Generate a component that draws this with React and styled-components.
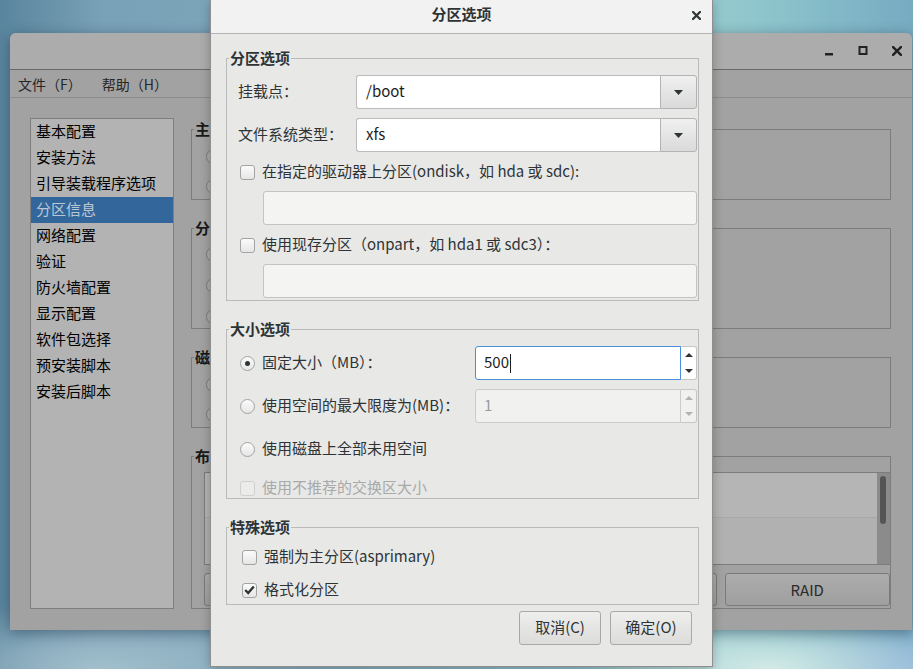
import React from 'react'
import styled, { createGlobalStyle } from 'styled-components'

const GlobalStyle = createGlobalStyle`
  html, body { margin: 0; padding: 0; }
  body {
    width: 913px;
    height: 669px;
    overflow: hidden;
    font-family: "Noto Sans CJK SC", "Noto Sans", sans-serif;
  }
`

const Desktop = styled.div`
  position: relative;
  width: 913px;
  height: 669px;
  overflow: hidden;
  background:
    radial-gradient(ellipse 190px 60px at 770px 669px, #d3eae7 0%, rgba(211,234,231,0) 100%),
    radial-gradient(ellipse 120px 50px at 913px 669px, #8cb2da 0%, rgba(140,178,218,0) 100%),
    radial-gradient(ellipse 230px 70px at 100px 669px, #a2bfcc 0%, rgba(162,191,204,0) 100%),
    linear-gradient(90deg, #5a859e 0px, #78a0b6 100px, #80a9bc 300px, #93c9cd 730px, #86bdc9 810px, #77abc2 913px);
`

/* ---------- main window (dimmed, behind the dialog) ---------- */

const MainWindow = styled.div`
  position: absolute;
  left: 10px;
  top: 33px;
  width: 902px;
  height: 597px;
  display: flex;
  flex-direction: column;
  background: #a2a2a2;
  border-radius: 6px 6px 0 0;
  box-shadow: 0 3px 14px rgba(20, 40, 60, 0.45);
  overflow: hidden;
  color: #1c1c1c;
`

const WinTitleBar = styled.div`
  height: 36px;
  flex: none;
  display: flex;
  align-items: center;
  justify-content: flex-end;
  gap: 10px;
  padding-right: 3px;
  background: #acacac;
  border-bottom: 1px solid #6a6a6a;
`

const WinButton = styled.div`
  width: 24px;
  height: 24px;
  display: grid;
  place-items: center;
`

const MenuBar = styled.div`
  height: 27px;
  flex: none;
  display: flex;
  align-items: center;
  gap: 20px;
  padding-left: 8px;
  border-bottom: 1px solid #8c8c8c;
  font-size: 14px;
  line-height: 18px;
  color: #262626;
`

const WinBody = styled.div`
  flex: 1;
  display: flex;
  gap: 17px;
  padding: 20px 21px 0 20px;
`

const Sidebar = styled.ul`
  margin: 0;
  padding: 0;
  list-style: none;
  width: 144px;
  height: 491px;
  flex: none;
  box-sizing: border-box;
  background: #b3b3b3;
  border: 1px solid #7f7f7f;
`

const SideItem = styled.li`
  height: 26px;
  line-height: 24px;
  padding-left: 5px;
  font-size: 15px;
  color: ${p => (p.$selected ? '#bcc7d4' : '#000')};
  background: ${p => (p.$selected ? '#33669a' : 'transparent')};
`

const MainColumn = styled.div`
  flex: 1;
  display: flex;
  flex-direction: column;
  gap: 28px;
  padding-top: 11px;
`

const MainGroup = styled.div`
  border: 1px solid #7c7c7c;
  display: flex;
  flex-direction: column;
  padding: 0 0 ${p => p.$pb}px ${p => p.$pl}px;
`

const MainGroupTitle = styled.div`
  align-self: flex-start;
  margin: -10px 0 0 ${p => 2 - p.$pl}px;
  padding: 0 1px;
  background: #a2a2a2;
  font-weight: bold;
  font-size: 15px;
  line-height: 18px;
  color: #1a1a1a;
`

const MainRadio = styled.span`
  display: block;
  width: 15px;
  height: 15px;
  box-sizing: border-box;
  border-radius: 50%;
  border: 1px solid #7b7b7b;
  background: #acacac;
  margin-top: ${p => p.$mt}px;
`

const LayoutList = styled.div`
  height: 93px;
  margin-top: 7px;
  box-sizing: border-box;
  border: 1px solid #7c7c7c;
  border-right: none;
  display: flex;
  background: #b1b1b1;
`

const ListRows = styled.div`
  flex: 1;
  display: flex;
  flex-direction: column;
`

const ListRow = styled.div`
  height: 44px;
  border-bottom: 1px solid ${p => (p.$light ? '#a8a8a8' : 'transparent')};
  background: ${p => (p.$light ? '#b5b5b5' : '#b1b1b1')};
`

const Scrollbar = styled.div`
  width: 13px;
  background: #8b8b8b;
  padding: 3px 0 0 3px;
  box-sizing: border-box;
`

const Thumb = styled.div`
  width: 6px;
  height: 48px;
  border-radius: 3px;
  background: #555;
`

const MainButtons = styled.div`
  margin-top: 8px;
  display: grid;
  grid-template-columns: repeat(4, 1fr);
  gap: 8px;
`

const MainButton = styled.div`
  height: 33px;
  box-sizing: border-box;
  border: 1px solid #7a7a7a;
  border-radius: 3px;
  background: linear-gradient(#acacac, #9f9f9f);
  display: grid;
  place-items: center;
  font-size: 15px;
  line-height: 18px;
  color: #2b2b2b;
`

/* ---------- dialog ---------- */

const Dialog = styled.div`
  position: absolute;
  left: 210px;
  top: 0;
  width: 503px;
  height: 667px;
  box-sizing: border-box;
  border: 1px solid #8f8f8f;
  border-top: none;
  background: #e8e8e7;
  display: flex;
  flex-direction: column;
  box-shadow: 0 2px 10px rgba(0, 0, 0, 0.25);
  color: #2e3436;
  font-size: 15px;
  line-height: 18px;
`

const DialogTitleBar = styled.div`
  height: 34px;
  flex: none;
  box-sizing: border-box;
  display: grid;
  grid-template-columns: 1fr auto 1fr;
  align-items: center;
  background: #f2f2f2;
  border-bottom: 1px solid #b3b3b3;
`

const DialogTitle = styled.div`
  font-weight: bold;
  font-size: 15px;
  color: #2e3436;
  margin-top: -6px;
`

const CloseBtn = styled.div`
  justify-self: end;
  margin-right: 11px;
  margin-top: -3px;
  display: grid;
  place-items: center;
`

const DialogBody = styled.div`
  flex: 1;
  display: flex;
  flex-direction: column;
  gap: 28px;
  padding: 24px 13px 0 15px;
`

const DGroup = styled.div`
  border: 1px solid #bababa;
  display: flex;
  flex-direction: column;
  padding: 0 1px ${p => p.$pb}px 11px;
`

const DGroupTitle = styled.div`
  align-self: flex-start;
  margin: -10px 0 0 -9px;
  padding: 0 1px;
  background: #e8e8e7;
  font-weight: bold;
  line-height: 18px;
`

const FormGrid = styled.div`
  display: grid;
  grid-template-columns: ${p => p.$label}px 1fr;
  grid-auto-rows: 34px;
  row-gap: 9px;
  align-items: center;
  margin-top: 8px;
`

const Text = styled.span`
  line-height: 18px;
  padding-bottom: 2px;
  color: ${p => (p.$disabled ? '#a9a9a9' : 'inherit')};
`

const Combo = styled.div`
  display: flex;
  height: 34px;
`

const ComboEntry = styled.div`
  flex: 1;
  display: flex;
  align-items: center;
  padding-left: 9px;
  background: #fff;
  border: 1px solid #bcbcbc;
  border-right: none;
  border-radius: 3px 0 0 3px;
  color: #1d1d1d;
`

const ComboButton = styled.div`
  width: 37px;
  box-sizing: border-box;
  border: 1px solid #b3b3b3;
  border-radius: 0 3px 3px 0;
  background: linear-gradient(#f0f0f0, #dadada);
  display: grid;
  place-items: center;
`

const CheckRow = styled.div`
  height: ${p => p.$h || 18}px;
  display: flex;
  align-items: center;
  gap: 7px;
  margin-left: ${p => p.$indent || 2}px;
  margin-top: ${p => p.$mt || 0}px;
  white-space: nowrap;
  ${p => p.$span && 'grid-column: 1 / span 2;'}
`

const Box = styled.span`
  width: 15px;
  height: 15px;
  flex: none;
  box-sizing: border-box;
  border: 1px solid ${p => (p.$disabled ? '#d0d0d0' : '#a3a3a3')};
  border-radius: ${p => (p.$round ? '50%' : '3px')};
  background: ${p => (p.$disabled ? '#ececeb' : 'linear-gradient(#fbfbfb, #e6e6e6)')};
  display: grid;
  place-items: center;
`

const Dot = styled.span`
  width: 5px;
  height: 5px;
  border-radius: 50%;
  background: #2e3436;
`

const InsensitiveEntry = styled.div`
  height: 34px;
  margin: ${p => p.$mt}px 0 0 25px;
  box-sizing: border-box;
  background: #f4f4f3;
  border: 1px solid #c3c3c3;
  border-radius: 3px;
`

const Spin = styled.div`
  display: flex;
  height: 34px;
`

const SpinEntry = styled.div`
  flex: 1;
  display: flex;
  align-items: center;
  padding-left: 8px;
  border: 1px solid ${p => (p.$focus ? '#4a90d9' : '#cbcbcb')};
  border-radius: 3px 0 0 3px;
  background: ${p => (p.$disabled ? '#f1f1f0' : '#fff')};
  color: ${p => (p.$disabled ? '#9c9c9c' : '#1d1d1d')};
`

const Caret = styled.span`
  width: 1px;
  height: 19px;
  margin-left: 1px;
  background: #1d1d1d;
`

const SpinArrows = styled.div`
  width: 16px;
  box-sizing: border-box;
  border: 1px solid #c6c6c6;
  border-left: none;
  border-radius: 0 3px 3px 0;
  background: ${p => (p.$disabled ? '#f1f1f0' : '#fff')};
  display: flex;
  flex-direction: column;
  justify-content: space-around;
  align-items: center;
`

const ButtonRow = styled.div`
  margin-top: -22px;
  display: flex;
  justify-content: flex-end;
  gap: 9px;
  padding-right: 7px;
`

const DlgButton = styled.div`
  width: 82px;
  height: 34px;
  box-sizing: border-box;
  border: 1px solid #a9a9a9;
  border-radius: 3px;
  background: linear-gradient(#eeeeed, #dcdcdb);
  display: grid;
  place-items: center;
  color: #2e3436;
`

/* ---------- small drawings ---------- */

const DownArrow = ({ w = 9, h = 5, color = '#2e3436' }) => (
  <svg width={w} height={h} viewBox={`0 0 ${w} ${h}`}>
    <polygon points={`0,0 ${w},0 ${w / 2},${h}`} fill={color} />
  </svg>
)

const UpArrow = ({ w = 8, h = 4, color = '#2e3436' }) => (
  <svg width={w} height={h} viewBox={`0 0 ${w} ${h}`}>
    <polygon points={`0,${h} ${w},${h} ${w / 2},0`} fill={color} />
  </svg>
)

const CheckMark = () => (
  <svg width="11" height="10" viewBox="0 0 11 10">
    <polyline points="1.2,5 4.2,8 9.8,1.5" fill="none" stroke="#2e3436" strokeWidth="2.4" />
  </svg>
)

const CloseIcon = ({ size = 9, color = '#2e3436' }) => (
  <svg width={size} height={size} viewBox="0 0 9 9">
    <path d="M1 1 L8 8 M8 1 L1 8" stroke={color} strokeWidth="2.2" strokeLinecap="square" />
  </svg>
)

function Checkbox({ label, checked, disabled, indent, mt }) {
  return (
    <CheckRow $indent={indent} $mt={mt}>
      <Box $disabled={disabled}>{checked && <CheckMark />}</Box>
      <Text $disabled={disabled}>{label}</Text>
    </CheckRow>
  )
}

function RadioRow({ label, checked, span, h }) {
  return (
    <CheckRow $span={span} $h={h}>
      <Box $round>{checked && <Dot />}</Box>
      <Text>{label}</Text>
    </CheckRow>
  )
}

function SpinBox({ value, focus, disabled }) {
  const c = disabled ? '#b3b3b3' : '#2e3436'
  return (
    <Spin>
      <SpinEntry $focus={focus} $disabled={disabled}>
        <Text>{value}</Text>
        {focus && <Caret />}
      </SpinEntry>
      <SpinArrows $disabled={disabled}>
        <UpArrow color={c} />
        <DownArrow w={8} h={4} color={c} />
      </SpinArrows>
    </Spin>
  )
}

const sideItems = [
  '基本配置', '安装方法', '引导装载程序选项', '分区信息', '网络配置', '验证',
  '防火墙配置', '显示配置', '软件包选择', '预安装脚本', '安装后脚本',
]

// only the first character of each title shows beside the dialog
const mainGroups = [
  { title: '主', pb: 5, radios: [11, 15] },
  { title: '分', pb: 4, radios: [10, 16, 16] },
  { title: '磁', pb: 5, radios: [11, 15] },
]

export default function App() {
  return (
    <Desktop>
      <GlobalStyle />

      <MainWindow>
        <WinTitleBar>
          <WinButton>
            <svg width="12" height="12" viewBox="0 0 12 12">
              <rect x="2" y="8" width="8" height="2.5" fill="#222" />
            </svg>
          </WinButton>
          <WinButton>
            <svg width="12" height="12" viewBox="0 0 12 12">
              <rect x="2.5" y="2" width="7" height="7" fill="none" stroke="#222" strokeWidth="2" />
            </svg>
          </WinButton>
          <WinButton>
            <CloseIcon size={10} color="#222" />
          </WinButton>
        </WinTitleBar>
        <MenuBar>
          <span>文件（F）</span>
          <span>帮助（H）</span>
        </MenuBar>
        <WinBody>
          <Sidebar>
            {sideItems.map(item => (
              <SideItem key={item} $selected={item === '分区信息'}>{item}</SideItem>
            ))}
          </Sidebar>
          <MainColumn>
            {mainGroups.map(g => (
              <MainGroup key={g.title} $pb={g.pb} $pl={14}>
                <MainGroupTitle $pl={14}>{g.title}</MainGroupTitle>
                {g.radios.map((mt, i) => (
                  <MainRadio key={i} $mt={mt} />
                ))}
              </MainGroup>
            ))}
            <MainGroup $pb={2} $pl={12}>
              <MainGroupTitle $pl={12}>布</MainGroupTitle>
              <LayoutList>
                <ListRows>
                  <ListRow $light />
                  <ListRow />
                </ListRows>
                <Scrollbar>
                  <Thumb />
                </Scrollbar>
              </LayoutList>
              <MainButtons>
                <MainButton />
                <MainButton />
                <MainButton />
                <MainButton>RAID</MainButton>
              </MainButtons>
            </MainGroup>
          </MainColumn>
        </WinBody>
      </MainWindow>

      <Dialog>
        <DialogTitleBar>
          <span />
          <DialogTitle>分区选项</DialogTitle>
          <CloseBtn>
            <CloseIcon />
          </CloseBtn>
        </DialogTitleBar>
        <DialogBody>
          <DGroup $pb={2}>
            <DGroupTitle>分区选项</DGroupTitle>
            <FormGrid $label={118}>
              <Text>挂载点：</Text>
              <Combo>
                <ComboEntry><Text>/boot</Text></ComboEntry>
                <ComboButton><DownArrow /></ComboButton>
              </Combo>
              <Text>文件系统类型：</Text>
              <Combo>
                <ComboEntry><Text>xfs</Text></ComboEntry>
                <ComboButton><DownArrow /></ComboButton>
              </Combo>
            </FormGrid>
            <Checkbox mt={11} label="在指定的驱动器上分区(ondisk，如 hda 或 sdc):" />
            <InsensitiveEntry $mt={10} />
            <Checkbox mt={11} label="使用现存分区（onpart，如 hda1 或 sdc3）：" />
            <InsensitiveEntry $mt={10} />
          </DGroup>

          <DGroup $pb={1}>
            <DGroupTitle>大小选项</DGroupTitle>
            <FormGrid $label={237}>
              <RadioRow checked label="固定大小（MB）：" />
              <SpinBox value="500" focus />
              <RadioRow label="使用空间的最大限度为(MB)：" />
              <SpinBox value="1" disabled />
              <RadioRow span h={32} label="使用磁盘上全部未用空间" />
            </FormGrid>
            <Checkbox mt={13} disabled label="使用不推荐的交换区大小" />
          </DGroup>

          <DGroup $pb={5}>
            <DGroupTitle>特殊选项</DGroupTitle>
            <Checkbox mt={12} indent={4} label="强制为主分区(asprimary)" />
            <Checkbox mt={15} indent={4} checked label="格式化分区" />
          </DGroup>

          <ButtonRow>
            <DlgButton><Text>取消(C)</Text></DlgButton>
            <DlgButton><Text>确定(O)</Text></DlgButton>
          </ButtonRow>
        </DialogBody>
      </Dialog>
    </Desktop>
  )
}
